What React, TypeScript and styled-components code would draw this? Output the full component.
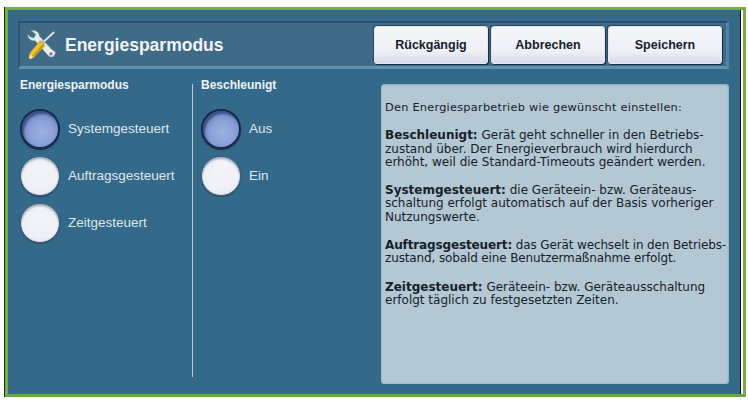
import React from "react";
import styled, { createGlobalStyle } from "styled-components";

const Global = createGlobalStyle`
  html, body { margin: 0; padding: 0; background: #fff; }
  body { width: 748px; height: 401px; overflow: hidden; }
`;

const Frame = styled.div`
  box-sizing: border-box;
  width: 741px;
  height: 390px;
  margin: 7px 0 0 5px;
  border: 3px solid #75ad47;
  border-bottom-color: #6ba548;
  box-shadow: -1px 0 0 #1a2a2a;
  background: #fff;
  display: flex;
`;

const Screen = styled.div`
  box-sizing: border-box;
  width: 733px;
  background: #35698a;
  border-right: 1px solid #000;
  display: flex;
  flex-direction: column;
  padding: 11px 0 0 10px;
`;

const Header = styled.header`
  box-sizing: border-box;
  height: 48px;
  width: 711px;
  display: flex;
  align-items: center;
  justify-content: space-between;
  padding: 0 4px 0 6px;
  background: #3f6b87;
  border-top: 2px solid #2a4f6c;
  border-left: 2px solid #2b526f;
  border-right: 3px solid #4d86a8;
  border-bottom: 3px solid #5c92b4;
`;

const TitleGroup = styled.div`
  display: flex;
  align-items: center;
  gap: 7px;
`;

const Title = styled.h1`
  margin: 0;
  font: 700 17.5px/22px "Liberation Sans", Arial, sans-serif;
  color: #f1f4f6;
`;

const Buttons = styled.div`
  display: flex;
  gap: 3px;
`;

const Button = styled.button`
  box-sizing: border-box;
  width: 114px;
  height: 38px;
  padding: 0;
  border: 1px solid #e5e8f0;
  border-radius: 3px;
  background: linear-gradient(#f5f6fa 0%, #f0f1f7 65%, #d8dbe6 100%);
  box-shadow: 1px 1px 0 #1c2c3f, -1px -1px 0 #264a63;
  font: 700 12.5px "Liberation Sans", Arial, sans-serif;
  color: #16202c;
`;

const Body = styled.main`
  flex: 1;
  display: flex;
  padding-top: 8px;
`;

const Column = styled.section<{ $width: number }>`
  width: ${(p) => p.$width}px;
  margin-left: 2px;
  flex: none;
`;

const Divider = styled.div`
  width: 1px;
  height: 293px;
  margin: 7px 6px 0 0;
  background: #b9cbd7;
  flex: none;
`;

const ColumnTitle = styled.h2`
  margin: 0 0 16px;
  font: 700 12px/16px "Liberation Sans", Arial, sans-serif;
  color: #eef2f5;
`;

const Options = styled.div`
  display: flex;
  flex-direction: column;
  gap: 7px;
`;

const Option = styled.div`
  display: flex;
  align-items: center;
  gap: 8px;
  height: 40px;
`;

const Radio = styled.span<{ $on?: boolean }>`
  box-sizing: border-box;
  width: 40px;
  height: 40px;
  border-radius: 50%;
  flex: none;
  border: ${(p) => (p.$on ? "2px solid #16294a" : "1px solid #3f6078")};
  background: ${(p) =>
    p.$on
      ? "radial-gradient(circle at 55% 60%, #9cb1e0 0%, #8ba2d8 40%, #6f88c2 72%, #4f67a0 100%)"
      : "radial-gradient(circle at 50% 42%, #f4f5fa 0%, #eff0f7 62%, #dfe1ea 80%, #b6bac8 100%)"};
  box-shadow: ${(p) =>
    p.$on
      ? "inset 2px 3px 2px #3d5389, 0 1px 1px #1a3146"
      : "inset 0 2px 2px #9fb0c0, 0 1px 1px #274a63"};
`;

const OptionLabel = styled.span`
  font: 400 13.5px/16px "Liberation Sans", Arial, sans-serif;
  color: #dfe6ea;
`;

const Info = styled.aside`
  box-sizing: border-box;
  width: 348px;
  height: 300px;
  margin: 7px 11px 0 auto;
  padding: 17px 2px 0 4px;
  background: #b3c8d3;
  border-radius: 4px;
  box-shadow: inset 0 1px 2px #8aa4b4, inset -1px -1px 1px #a3bac8;
  font: 400 12px/13.3px "DejaVu Sans", Verdana, sans-serif;
  color: #17212b;
  white-space: nowrap;
`;

const Para = styled.p<{ $intro?: boolean; $tight?: boolean }>`
  margin: 0 0 15px;
  font-size: ${(p) => (p.$intro ? "11.3px" : "inherit")};
  letter-spacing: ${(p) => (p.$intro ? "0.26px" : p.$tight ? "-0.13px" : "normal")};
`;

const Wrench = () => (
  <svg width="32" height="32" viewBox="0 0 36 36" aria-hidden="true">
    <path d="M2 6 C2 11 6 14 10 13 L25 30 C28 33 33 31 33 27 C33 25 31 24 29 23 L15 8 C15 3 10 1 6 2 L11 6 L9 10 L5 9 Z" fill="#ecece6" stroke="#7f8f9c" strokeWidth="0.7" />
    <circle cx="28" cy="28" r="1.8" fill="#6d7f8e" />
    <path d="M18 16 L31 4" stroke="#6f8090" strokeWidth="3.2" strokeLinecap="round" />
    <path d="M18 16 L31 4" stroke="#e8ebec" strokeWidth="1.8" strokeLinecap="round" />
    <path d="M16 13 L21 18 L10 31 L6 34 L3 31 L5 26 Z" fill="#efc32f" stroke="#8f7a20" strokeWidth="0.6" />
    <path d="M19 17 L7 30 L9 32 L21 19 Z" fill="#c99a1c" />
    <path d="M5 28 L8 32 L3 34 Z" fill="#ece2b8" />
  </svg>
);

const Strong = styled.b`
  font-weight: 700;
`;

export default function App() {
  return (
    <>
      <Global />
      <Frame>
        <Screen>
          <Header>
            <TitleGroup>
              <Wrench />
              <Title>Energiesparmodus</Title>
            </TitleGroup>
            <Buttons>
              <Button>Rückgängig</Button>
              <Button>Abbrechen</Button>
              <Button>Speichern</Button>
            </Buttons>
          </Header>
          <Body>
            <Column $width={172}>
              <ColumnTitle>Energiesparmodus</ColumnTitle>
              <Options>
                <Option><Radio $on /><OptionLabel>Systemgesteuert</OptionLabel></Option>
                <Option><Radio /><OptionLabel>Auftragsgesteuert</OptionLabel></Option>
                <Option><Radio /><OptionLabel>Zeitgesteuert</OptionLabel></Option>
              </Options>
            </Column>
            <Divider />
            <Column $width={150}>
              <ColumnTitle>Beschleunigt</ColumnTitle>
              <Options>
                <Option><Radio $on /><OptionLabel>Aus</OptionLabel></Option>
                <Option><Radio /><OptionLabel>Ein</OptionLabel></Option>
              </Options>
            </Column>
            <Info>
              <Para $intro>Den Energiesparbetrieb wie gewünscht einstellen:</Para>
              <Para><Strong>Beschleunigt:</Strong> Gerät geht schneller in den Betriebs-<br />zustand über. Der Energieverbrauch wird hierdurch<br />erhöht, weil die Standard-Timeouts geändert werden.</Para>
              <Para><Strong>Systemgesteuert:</Strong> die Geräteein- bzw. Geräteaus-<br />schaltung erfolgt automatisch auf der Basis vorheriger<br />Nutzungswerte.</Para>
              <Para $tight><Strong>Auftragsgesteuert:</Strong> das Gerät wechselt in den Betriebs-<br />zustand, sobald eine Benutzermaßnahme erfolgt.</Para>
              <Para><Strong>Zeitgesteuert:</Strong> Geräteein- bzw. Geräteausschaltung<br />erfolgt täglich zu festgesetzten Zeiten.</Para>
            </Info>
          </Body>
        </Screen>
      </Frame>
    </>
  );
}
